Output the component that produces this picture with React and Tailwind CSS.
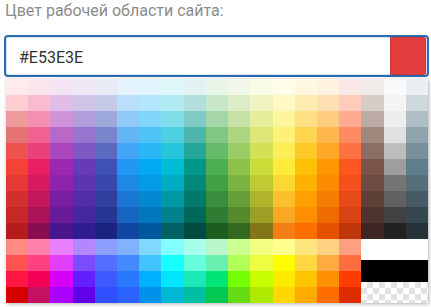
import React from 'react';

const palette = [
  ['#FFEBEE', '#FFCDD2', '#EF9A9A', '#E57373', '#EF5350', '#F44336', '#E53935', '#D32F2F', '#C62828', '#B71C1C', '#FF8A80', '#FF5252', '#FF1744', '#D50000'],
  ['#FCE4EC', '#F8BBD0', '#F48FB1', '#F06292', '#EC407A', '#E91E63', '#D81B60', '#C2185B', '#AD1457', '#880E4F', '#FF80AB', '#FF4081', '#F50057', '#C51162'],
  ['#F3E5F5', '#E1BEE7', '#CE93D8', '#BA68C8', '#AB47BC', '#9C27B0', '#8E24AA', '#7B1FA2', '#6A1B9A', '#4A148C', '#EA80FC', '#E040FB', '#D500F9', '#AA00FF'],
  ['#EDE7F6', '#D1C4E9', '#B39DDB', '#9575CD', '#7E57C2', '#673AB7', '#5E35B1', '#512DA8', '#4527A0', '#311B92', '#B388FF', '#7C4DFF', '#651FFF', '#6200EA'],
  ['#E8EAF6', '#C5CAE9', '#9FA8DA', '#7986CB', '#5C6BC0', '#3F51B5', '#3949AB', '#303F9F', '#283593', '#1A237E', '#8C9EFF', '#536DFE', '#3D5AFE', '#304FFE'],
  ['#E3F2FD', '#BBDEFB', '#90CAF9', '#64B5F6', '#42A5F5', '#2196F3', '#1E88E5', '#1976D2', '#1565C0', '#0D47A1', '#82B1FF', '#448AFF', '#2979FF', '#2962FF'],
  ['#E1F5FE', '#B3E5FC', '#81D4FA', '#4FC3F7', '#29B6F6', '#03A9F4', '#039BE5', '#0288D1', '#0277BD', '#01579B', '#80D8FF', '#40C4FF', '#00B0FF', '#0091EA'],
  ['#E0F7FA', '#B2EBF2', '#80DEEA', '#4DD0E1', '#26C6DA', '#00BCD4', '#00ACC1', '#0097A7', '#00838F', '#006064', '#84FFFF', '#18FFFF', '#00E5FF', '#00B8D4'],
  ['#E0F2F1', '#B2DFDB', '#80CBC4', '#4DB6AC', '#26A69A', '#009688', '#00897B', '#00796B', '#00695C', '#004D40', '#A7FFEB', '#64FFDA', '#1DE9B6', '#00BFA5'],
  ['#E8F5E9', '#C8E6C9', '#A5D6A7', '#81C784', '#66BB6A', '#4CAF50', '#43A047', '#388E3C', '#2E7D32', '#1B5E20', '#B9F6CA', '#69F0AE', '#00E676', '#00C853'],
  ['#F1F8E9', '#DCEDC8', '#C5E1A5', '#AED581', '#9CCC65', '#8BC34A', '#7CB342', '#689F38', '#558B2F', '#33691E', '#CCFF90', '#B2FF59', '#76FF03', '#64DD17'],
  ['#F9FBE7', '#F0F4C3', '#E6EE9C', '#DCE775', '#D4E157', '#CDDC39', '#C0CA33', '#AFB42B', '#9E9D24', '#827717', '#F4FF81', '#EEFF41', '#C6FF00', '#AEEA00'],
  ['#FFFDE7', '#FFF9C4', '#FFF59D', '#FFF176', '#FFEE58', '#FFEB3B', '#FDD835', '#FBC02D', '#F9A825', '#F57F17', '#FFFF8D', '#FFFF00', '#FFEA00', '#FFD600'],
  ['#FFF8E1', '#FFECB3', '#FFE082', '#FFD54F', '#FFCA28', '#FFC107', '#FFB300', '#FFA000', '#FF8F00', '#FF6F00', '#FFE57F', '#FFD740', '#FFC400', '#FFAB00'],
  ['#FFF3E0', '#FFE0B2', '#FFCC80', '#FFB74D', '#FFA726', '#FF9800', '#FB8C00', '#F57C00', '#EF6C00', '#E65100', '#FFD180', '#FFAB40', '#FF9100', '#FF6D00'],
  ['#FBE9E7', '#FFCCBC', '#FFAB91', '#FF8A65', '#FF7043', '#FF5722', '#F4511E', '#E64A19', '#D84315', '#BF360C', '#FF9E80', '#FF6E40', '#FF3D00', '#DD2C00'],
  ['#EFEBE9', '#D7CCC8', '#BCAAA4', '#A1887F', '#8D6E63', '#795548', '#6D4C41', '#5D4037', '#4E342E', '#3E2723'],
  ['#FAFAFA', '#F5F5F5', '#EEEEEE', '#E0E0E0', '#BDBDBD', '#9E9E9E', '#757575', '#616161', '#424242', '#212121'],
  ['#ECEFF1', '#CFD8DC', '#B0BEC5', '#90A4AE', '#78909C', '#607D8B', '#546E7A', '#455A64', '#37474F', '#263238'],
];

function App() {
  // row-major cells; rows 10..13 only have the 16 accent columns
  const cells = [];
  for (let r = 0; r < 14; r++) {
    palette.forEach((col, c) => {
      if (col[r]) cells.push(<div key={`${r}-${c}`} className="cursor-pointer" style={{ backgroundColor: col[r] }} />);
    });
  }

  return (
    <div className="min-h-screen bg-white pl-[4px] pr-[2px] font-['Roboto','Liberation_Sans',sans-serif]">
      <div className="pl-px text-[16px] leading-[22px] text-[#8c8c8c]">Цвет рабочей области сайта:</div>

      <div className="mt-[13px] flex h-[42px] rounded-[4px] border-2 border-[#2c6aae] bg-white shadow-[inset_0_0_0_1px_#d6e6f7]">
        <div className="flex-1 pl-[13px] pt-[11px] text-[16px] leading-[19px] text-[#333]">#E53E3E</div>
        <div className="mr-px w-[36px] rounded-r-[2px] border border-[#c93535] bg-[#E53E3E]" />
      </div>

      <div className="ml-[2px] mt-[2px] w-[422px] bg-white shadow-[1px_1px_4px_rgba(0,0,0,0.3)]">
        <div className="grid grid-cols-[repeat(19,minmax(0,1fr))] auto-rows-[16px]">
          {cells}
          <div className="col-start-17 col-span-3 row-start-11 row-span-4 flex flex-col">
            <div className="flex-1 bg-white" />
            <div className="flex-1 bg-black" />
            <div className="flex-1 bg-[image:conic-gradient(#e2e2e2_25%,#fff_0_50%,#e2e2e2_0_75%,#fff_0)] bg-[length:12px_12px]" />
          </div>
        </div>
      </div>
    </div>
  );
}

export default App;
